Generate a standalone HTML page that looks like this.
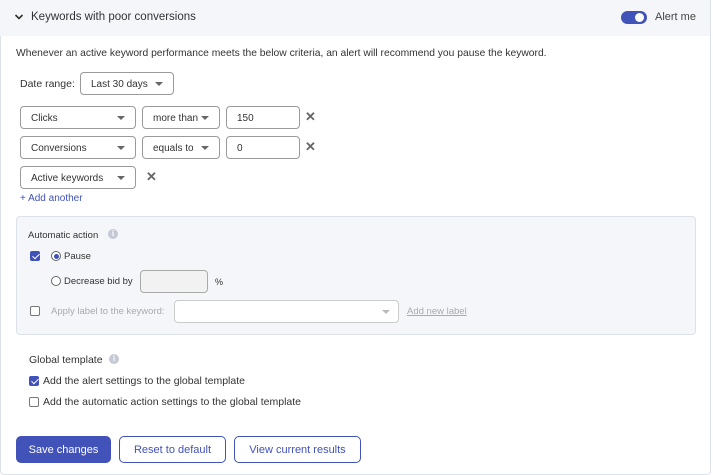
<!DOCTYPE html><html><head><style>
*{box-sizing:border-box;margin:0;padding:0}
body{width:713px;height:475px;background:#fff;font-family:"Liberation Sans",sans-serif;font-size:11px;color:#333;position:relative;overflow:hidden}
.card{position:absolute;left:0;top:0;width:711px;height:475px;border:1px solid #dde1ea;border-top:none;border-radius:0 0 4px 4px}
.hdr{position:absolute;left:0;top:0;width:711px;height:36px;background:#f5f6f9;border-right:1px solid #dde1ea}
.a{position:absolute;white-space:nowrap}
.sel,.inp{position:absolute;height:23px;border:1px solid #9a9a9a;border-radius:4px;background:#fff;font-size:10px;padding:6px 0 0 10px;color:#333}
.sel::after{content:"";position:absolute;right:10px;top:9px;border-left:4px solid transparent;border-right:4px solid transparent;border-top:4px solid #666}
.x{position:absolute;font-size:13px;color:#666;font-weight:bold}
.btn{position:absolute;top:436px;height:27px;border:1px solid #4152b8;border-radius:5px;color:#4152b8;font-size:11px;text-align:center;line-height:26px;background:#fff}
.cb{position:absolute;width:10px;height:10px;border:1px solid #777;border-radius:2px;background:#fff}
.cbon{background:#4152b8;border-color:#4152b8}
.cbon::after{content:"";position:absolute;left:2.5px;top:0px;width:3px;height:6px;border:solid #fff;border-width:0 1.5px 1.5px 0;transform:rotate(45deg)}
.rad{position:absolute;width:10px;height:10px;border:1px solid #666;border-radius:50%;background:#fff}
.info{position:absolute;width:10px;height:10px;border-radius:50%;background:#c5c9d6;color:#fff;font-size:8px;text-align:center;line-height:10px;font-weight:bold}
</style></head><body>
<div class="card"></div>
<div class="hdr"></div>
<svg class="a" style="left:14px;top:13px" width="10" height="8"><path d="M1.5 2 L5 5.5 L8.5 2" stroke="#333" stroke-width="1.6" fill="none"/></svg>
<div class="a" style="left:31px;top:11px;font-size:11.5px;color:#333">Keywords with poor conversions</div>
<div class="a" style="left:621px;top:11px;width:26px;height:13px;border-radius:7px;background:#4152b8"></div>
<div class="a" style="left:635px;top:13px;width:9px;height:9px;border-radius:50%;background:#fff"></div>
<div class="a" style="left:655px;top:11px;font-size:11px;color:#444">Alert me</div>
<div class="a" style="left:16px;top:48px;font-size:10.3px">Whenever an active keyword performance meets the below criteria, an alert will recommend you pause the keyword.</div>
<div class="a" style="left:20px;top:78px;font-size:10.5px">Date range:</div>
<div class="sel" style="left:80px;top:72px;width:94px">Last 30 days</div>
<div class="sel" style="left:20px;top:106px;width:116px">Clicks</div>
<div class="sel" style="left:142px;top:106px;width:78px">more than</div>
<div class="inp" style="left:226px;top:106px;width:74px">150</div>
<div class="x" style="left:305px;top:109px">✕</div>
<div class="sel" style="left:20px;top:136px;width:116px">Conversions</div>
<div class="sel" style="left:142px;top:136px;width:78px">equals to</div>
<div class="inp" style="left:226px;top:136px;width:74px">0</div>
<div class="x" style="left:305px;top:139px">✕</div>
<div class="sel" style="left:20px;top:166px;width:116px">Active keywords</div>
<div class="x" style="left:146px;top:169px">✕</div>
<div class="a" style="left:20px;top:193px;font-size:10px;color:#4152b8">+ Add another</div>
<div class="a" style="left:16px;top:216px;width:680px;height:119px;background:#f5f6f9;border:1px solid #dde1ea;border-radius:4px"></div>
<div class="a" style="left:28px;top:230px;font-size:9.5px">Automatic action</div>
<div class="info" style="left:108px;top:229px">i</div>
<div class="cb cbon" style="left:30px;top:251px"></div>
<div class="rad" style="left:51px;top:251px"></div><div class="a" style="left:53.5px;top:253.5px;width:5px;height:5px;border-radius:50%;background:#4152b8"></div>
<div class="a" style="left:64px;top:251px;font-size:9.5px">Pause</div>
<div class="rad" style="left:51px;top:276px"></div>
<div class="a" style="left:64px;top:276px;font-size:9.5px">Decrease bid by</div>
<div class="a" style="left:140px;top:270px;width:68px;height:23px;border:1px solid #aaa;border-radius:4px;background:#f2f2f2"></div>
<div class="a" style="left:215px;top:277px;font-size:9px">%</div>
<div class="cb" style="left:30px;top:306px"></div>
<div class="a" style="left:51px;top:306px;font-size:9.5px;color:#aaa">Apply label to the keyword:</div>
<div class="a" style="left:174px;top:300px;width:225px;height:23px;border:1px solid #ccc;border-radius:4px;background:#fff"></div>
<div class="a" style="left:382px;top:310px;border-left:4px solid transparent;border-right:4px solid transparent;border-top:4px solid #bbb"></div>
<div class="a" style="left:407px;top:306px;font-size:9.5px;color:#aaa;text-decoration:underline">Add new label</div>
<div class="a" style="left:29px;top:354px;font-size:10.5px">Global template</div>
<div class="info" style="left:109px;top:354px">i</div>
<div class="cb cbon" style="left:29px;top:376px"></div>
<div class="a" style="left:43px;top:375px;font-size:10.5px">Add the alert settings to the global template</div>
<div class="cb" style="left:29px;top:397px"></div>
<div class="a" style="left:43px;top:396px;font-size:10.5px">Add the automatic action settings to the global template</div>
<div class="btn" style="left:16px;width:95px;background:#4152b8;color:#fff">Save changes</div>
<div class="btn" style="left:119px;width:107px">Reset to default</div>
<div class="btn" style="left:234px;width:127px">View current results</div>
</body></html>
